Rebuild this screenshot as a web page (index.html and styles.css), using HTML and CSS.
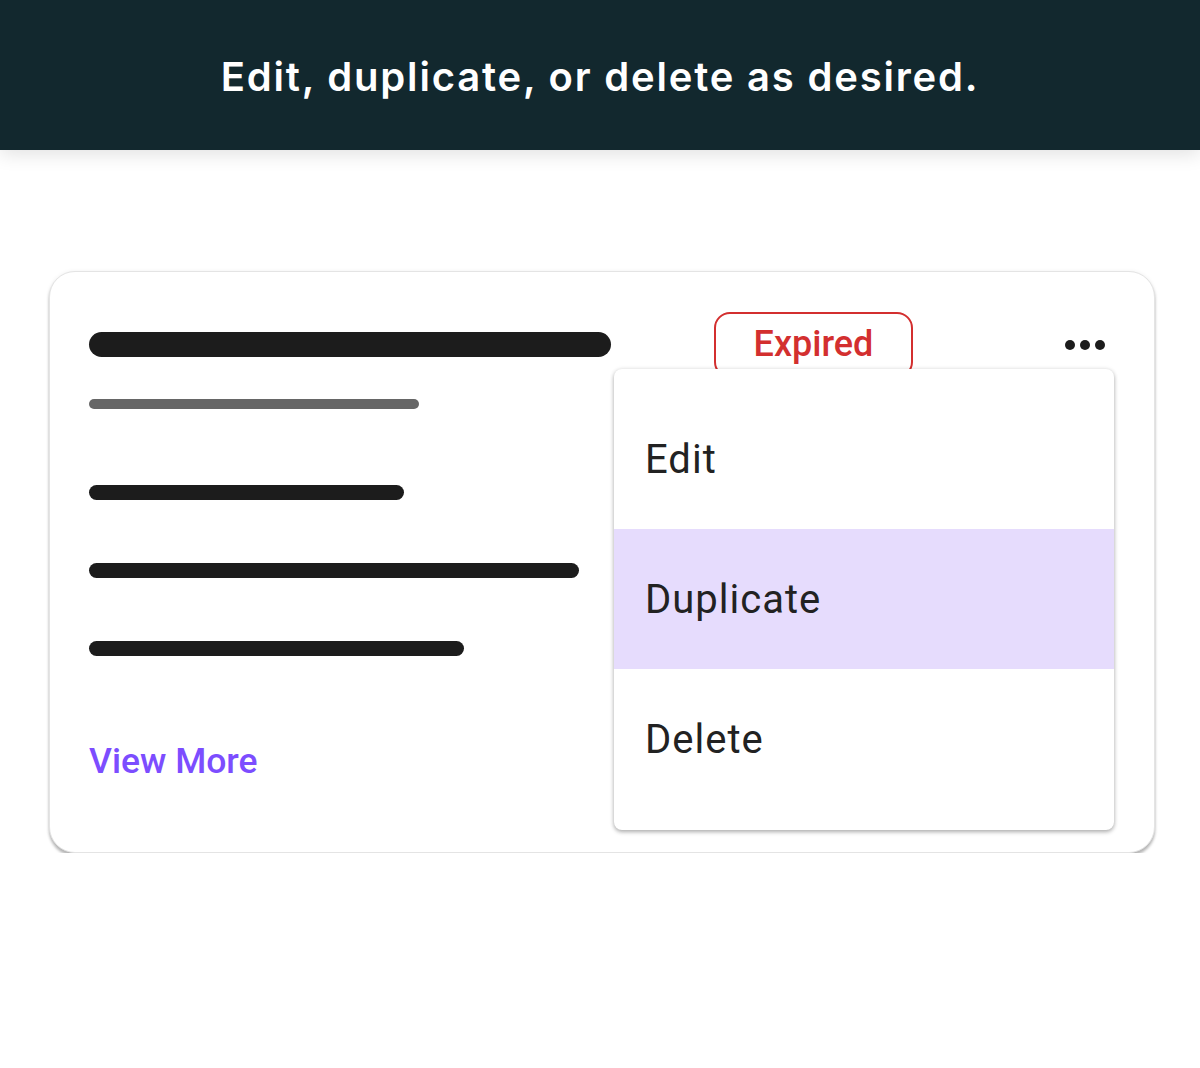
FILE: index.html
```html
<!DOCTYPE html>
<html lang="en">
<head>
<meta charset="utf-8">
<title>Edit, duplicate, or delete</title>
<link rel="stylesheet" href="styles.css">
</head>
<body>
<header class="banner">
  <h1 class="banner-title">Edit, duplicate, or delete as desired.</h1>
</header>
<main class="stage">
  <section class="card">
    <div class="card-head">
      <div class="bar bar-title"></div>
      <span class="badge">Expired</span>
      <button class="more" aria-label="More options">
        <span class="dot"></span><span class="dot"></span><span class="dot"></span>
      </button>
    </div>
    <div class="bar bar-sub"></div>
    <div class="bar bar-line bar-l1"></div>
    <div class="bar bar-line bar-l2"></div>
    <div class="bar bar-line bar-l3"></div>
    <a class="view-more" href="#">View More</a>

    <ul class="menu">
      <li class="menu-item">Edit</li>
      <li class="menu-item is-active">Duplicate</li>
      <li class="menu-item">Delete</li>
    </ul>
  </section>
</main>
</body>
</html>
```
FILE: styles.css
```css
* { box-sizing: border-box; }

html, body {
  margin: 0;
  padding: 0;
  background: #ffffff;
  font-family: Roboto, "Liberation Sans", sans-serif;
}

.banner {
  height: 150px;
  background: #12282e;
  display: flex;
  align-items: center;
  justify-content: center;
  box-shadow: 0 4px 18px rgba(0, 0, 0, 0.12);
  position: relative;
  z-index: 1;
}

.banner-title {
  margin: 0;
  color: #ffffff;
  font-family: Inter, "Noto Sans", sans-serif;
  font-weight: 600;
  font-size: 40px;
  letter-spacing: 1.8px;
  line-height: 1;
  padding-top: 4px;
}

.stage {
  padding: 121px 45px 0 49px;
}

.card {
  position: relative;
  width: 1106px;
  height: 582px;
  border: 1px solid #e4e4e4;
  border-radius: 26px;
  background: #fff;
  box-shadow: 0 3px 3px rgba(0, 0, 0, 0.28), 0 0 4px rgba(0, 0, 0, 0.06);
  padding: 40px 49px 0 39px;
}

.card-head {
  display: flex;
  align-items: center;
  height: 66px;
}

.bar {
  background: #1c1c1c;
  border-radius: 999px;
}

.bar-title {
  width: 522px;
  height: 25px;
  margin-top: -1px;
}

.badge {
  margin-left: 103px;
  width: 199px;
  height: 66px;
  border: 2px solid #d32f2f;
  border-radius: 16px;
  color: #d32f2f;
  font-weight: 500;
  font-size: 36px;
  display: flex;
  align-items: center;
  justify-content: center;
  padding-bottom: 2px;
}

.more {
  margin-left: auto;
  display: flex;
  gap: 5px;
  padding: 0;
  border: 0;
  background: none;
}

.dot {
  width: 10px;
  height: 10px;
  border-radius: 50%;
  background: #1c1c1c;
}

.bar-sub {
  width: 330px;
  height: 10px;
  margin-top: 21px;
  background: #666666;
}

.bar-line {
  height: 15px;
}

.bar-l1 { width: 315px; margin-top: 76px; }
.bar-l2 { width: 490px; margin-top: 63px; }
.bar-l3 { width: 375px; margin-top: 63px; }

.view-more {
  display: inline-block;
  margin-top: 85px;
  color: #7c4dff;
  font-weight: 500;
  font-size: 35.5px;
  line-height: 40px;
  text-decoration: none;
}

.menu {
  position: absolute;
  left: 564px;
  top: 97px;
  width: 500px;
  margin: 0;
  padding: 19px 0 21px;
  list-style: none;
  background: #ffffff;
  border-radius: 8px;
  box-shadow: 0 2px 4px rgba(0, 0, 0, 0.3), 0 0 5px rgba(0, 0, 0, 0.08);
  z-index: 2;
}

.menu-item {
  height: 140px;
  display: flex;
  align-items: center;
  padding-left: 31px;
  font-size: 40px;
  letter-spacing: 1px;
  color: #222222;
}

.menu-item:first-child { padding-top: 2px; height: 141px; }

.menu-item.is-active {
  background: #e6dcfd;
}
```
